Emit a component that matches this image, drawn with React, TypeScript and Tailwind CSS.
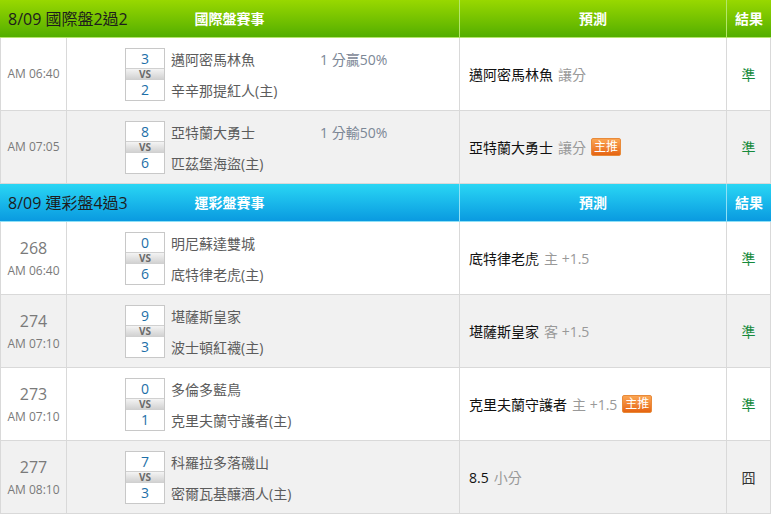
import React from "react";

type Game = {
  no?: string;
  time: string;
  s1: string;
  s2: string;
  away: string;
  home: string;
  line?: string;
  pick: string;
  pickNote: string;
  hot?: boolean;
  result: string;
};

const intl: Game[] = [
  { time: "AM 06:40", s1: "3", s2: "2", away: "邁阿密馬林魚", home: "辛辛那提紅人(主)", line: "1 分贏50%", pick: "邁阿密馬林魚", pickNote: "讓分", result: "準" },
  { time: "AM 07:05", s1: "8", s2: "6", away: "亞特蘭大勇士", home: "匹茲堡海盜(主)", line: "1 分輸50%", pick: "亞特蘭大勇士", pickNote: "讓分", hot: true, result: "準" },
];

const sports: Game[] = [
  { no: "268", time: "AM 06:40", s1: "0", s2: "6", away: "明尼蘇達雙城", home: "底特律老虎(主)", pick: "底特律老虎", pickNote: "主 +1.5", result: "準" },
  { no: "274", time: "AM 07:10", s1: "9", s2: "3", away: "堪薩斯皇家", home: "波士頓紅襪(主)", pick: "堪薩斯皇家", pickNote: "客 +1.5", result: "準" },
  { no: "273", time: "AM 07:10", s1: "0", s2: "1", away: "多倫多藍鳥", home: "克里夫蘭守護者(主)", pick: "克里夫蘭守護者", pickNote: "主 +1.5", hot: true, result: "準" },
  { no: "277", time: "AM 08:10", s1: "7", s2: "3", away: "科羅拉多落磯山", home: "密爾瓦基釀酒人(主)", pick: "8.5", pickNote: "小分", result: "囧" },
];

const font = { fontFamily: '"Open Sans", "Noto Sans CJK TC", sans-serif' };

function Header({ title, label, blue }: { title: string; label: string; blue?: boolean }) {
  const bg = blue
    ? "bg-gradient-to-b from-[#2ad6f4] to-[#0a9ae0] border-[#8fe0f6]"
    : "bg-gradient-to-b from-[#98d800] to-[#52ae00] border-[#b4e66a]";
  const sep = blue ? "border-[#8fe0f6]" : "border-[#b4e66a]";
  return (
    <div className={`grid grid-cols-[459px_267px_45px] h-[38px] border-b ${bg}`}>
      <div className="relative flex items-center justify-center">
        <span className="absolute left-[8px] text-[16px] text-[#1d1d1d]">{title}</span>
        <span className="text-[14px] font-bold text-white">{label}</span>
      </div>
      <div className={`flex items-center justify-center border-l text-[14px] font-bold text-white ${sep}`}>
        預測
      </div>
      <div className={`flex items-center justify-center border-l text-[14px] font-bold text-white ${sep}`}>
        結果
      </div>
    </div>
  );
}

function Row({ g, gray }: { g: Game; gray: boolean }) {
  return (
    <div className={`grid grid-cols-[66px_393px_267px_45px] h-[73px] border-b border-[#d9d9d9] ${gray ? "bg-[#f1f1f1]" : "bg-white"}`}>
      <div className="flex flex-col items-center justify-center border-l border-[#d9d9d9] text-[#7a7a7a]">
        {g.no && <span className="text-[16px] leading-[22px]">{g.no}</span>}
        <span className={`text-[12px] ${g.no ? "mt-[3px]" : ""}`}>{g.time}</span>
      </div>
      <div className="flex items-center border-l border-[#d9d9d9] pl-[58px]">
        <div className="flex w-[40px] flex-col border border-[#c8c8c8] bg-white text-center">
          <div className="h-[19px] text-[14px] leading-[19px] text-[#1d6fa8]">{g.s1}</div>
          <div className="h-[12px] border-y border-[#d0d0d0] bg-gradient-to-b from-[#f4f4f4] to-[#d2d2d2] text-[10px] font-bold leading-[10px] text-[#6a6a6a]">
            VS
          </div>
          <div className="h-[20px] text-[14px] leading-[20px] text-[#1d6fa8]">{g.s2}</div>
        </div>
        <div className="ml-[6px] mt-[2px] flex flex-col gap-[11px] text-[14px] leading-[20px] text-[#5c5c5c]">
          <div className="flex">
            <span className="w-[149px]">{g.away}</span>
            {g.line && <span className="text-[#7c8796]">{g.line}</span>}
          </div>
          <span>{g.home}</span>
        </div>
      </div>
      <div className="flex items-center border-l border-[#d9d9d9] pl-[9px] text-[14px]">
        <span className="text-[#111]">{g.pick}</span>
        <span className="ml-[5px] text-[#999]">{g.pickNote}</span>
        {g.hot && (
          <span className="ml-[5px] rounded-[2px] border border-[#e88a3a] bg-gradient-to-b from-[#fba552] to-[#e5640e] px-[2px] text-[12px] leading-[16px] text-white">
            主推
          </span>
        )}
      </div>
      <div className={`flex items-center justify-center border-x border-[#d9d9d9] text-[14px] ${g.result === "準" ? "text-[#168a3c]" : "text-[#333]"}`}>
        {g.result}
      </div>
    </div>
  );
}

export default function App() {
  return (
    <div className="w-[771px] h-[514px] overflow-hidden bg-white" style={font}>
      <Header title="8/09 國際盤2過2" label="國際盤賽事" />
      {intl.map((g, i) => (
        <Row key={i} g={g} gray={i % 2 === 1} />
      ))}
      <Header title="8/09 運彩盤4過3" label="運彩盤賽事" blue />
      {sports.map((g, i) => (
        <Row key={i} g={g} gray={i % 2 === 1} />
      ))}
    </div>
  );
}
